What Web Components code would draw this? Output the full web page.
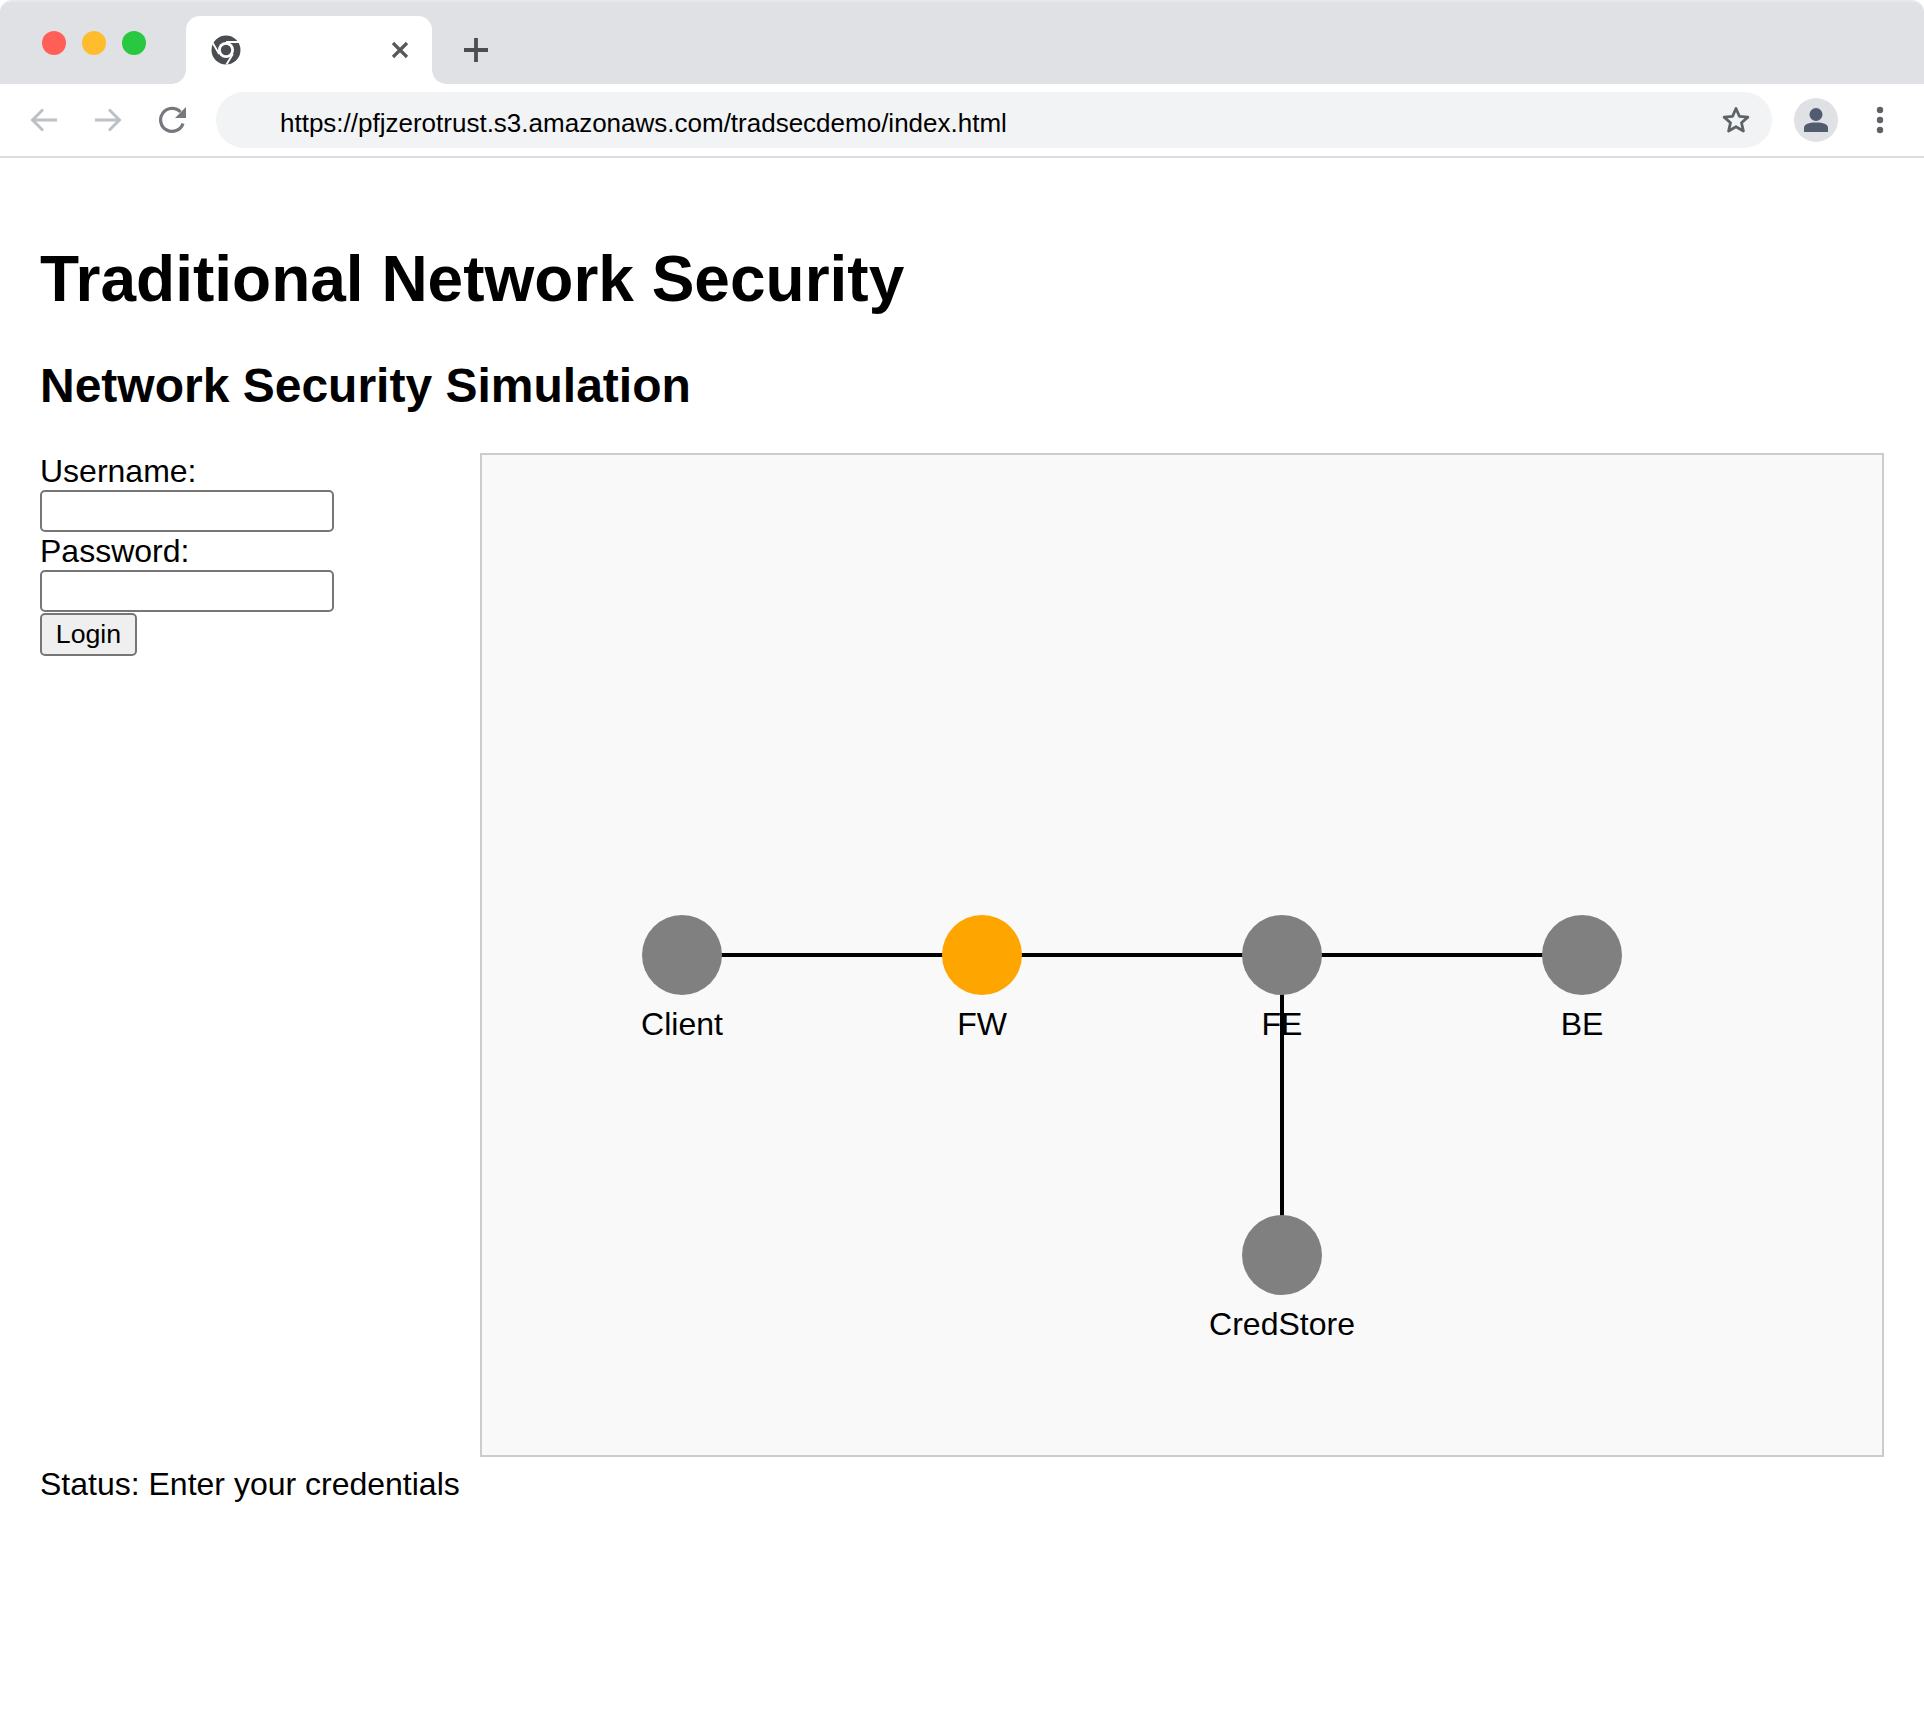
<!DOCTYPE html>
<html>
<head>
<meta charset="utf-8">
<title>Traditional Network Security</title>
<style>
    html, body { margin: 0; background: #fff; }
    body { font-family: "Liberation Sans", Arial, sans-serif; color: #000; }
</style>
</head>
<body>
<browser-frame url="https://pfjzerotrust.s3.amazonaws.com/tradsecdemo/index.html"></browser-frame>
<security-page heading="Traditional Network Security" subheading="Network Security Simulation" status="Status: Enter your credentials">
    <login-form slot="form"></login-form>
    <network-diagram slot="diagram"></network-diagram>
</security-page>

<script>
/**
 * Fake browser chrome: tab strip on top and toolbar with the address bar below it.
 */
class BrowserFrame extends HTMLElement {
    constructor() {
        super();
        this.attachShadow({ mode: "open" });
    }

    connectedCallback() {
        const url = this.getAttribute('url') || '';

        this.shadowRoot.innerHTML = `
            <style>
                :host { display: block; font-family: "Liberation Sans", Arial, sans-serif; }
                .strip {
                    height: 84px;
                    box-sizing: border-box;
                    background: #dfe1e5;
                    border-top: 2px solid #e8e9ec;
                    border-radius: 12px 12px 0 0;
                    display: flex;
                    align-items: flex-end;
                }
                .lights {
                    width: 186px;
                    height: 100%;
                    box-sizing: border-box;
                    padding: 29px 0 0 42px;
                    display: flex;
                    gap: 16px;
                }
                .lights i { width: 24px; height: 24px; border-radius: 50%; }
                .tab {
                    position: relative;
                    width: 246px;
                    height: 68px;
                    box-sizing: border-box;
                    background: #fff;
                    border-radius: 14px 14px 0 0;
                    display: flex;
                    align-items: center;
                    justify-content: space-between;
                    padding: 0 23px 0 25px;
                }
                /* concave corners where the tab meets the toolbar */
                .tab::before, .tab::after {
                    content: "";
                    position: absolute;
                    bottom: 0;
                    width: 14px;
                    height: 14px;
                }
                .tab::before { left: -14px; background: radial-gradient(circle at 0 0, transparent 13.5px, #fff 14px); }
                .tab::after { right: -14px; background: radial-gradient(circle at 100% 0, transparent 13.5px, #fff 14px); }
                .tab svg { display: block; }
                .plus { margin: 0 0 21px 31px; display: block; }
                .bar {
                    height: 74px;
                    box-sizing: border-box;
                    border-bottom: 2px solid #dcdde0;
                    display: flex;
                    align-items: center;
                    padding: 0 39px 0 30px;
                    background: #fff;
                }
                .nav { display: flex; gap: 36px; align-items: center; margin-right: 28px; }
                .nav svg { display: block; }
                .address {
                    flex: 1;
                    height: 56px;
                    border-radius: 28px;
                    background: #f1f3f4;
                    display: flex;
                    align-items: center;
                    justify-content: space-between;
                    padding: 0 21px 0 64px;
                    font-size: 26px;
                    color: #000;
                }
                .address span { padding-top: 6px; }
                .avatar {
                    width: 44px;
                    height: 44px;
                    border-radius: 50%;
                    background: #dfe1e5;
                    margin-left: 22px;
                    display: flex;
                    align-items: center;
                    justify-content: center;
                }
                .more { margin-left: 37px; display: block; }
            </style>
            <div class="strip">
                <div class="lights">
                    <i style="background:#ff5f57"></i>
                    <i style="background:#ffbd2e"></i>
                    <i style="background:#28c840"></i>
                </div>
                <div class="tab">
                    <svg width="30" height="30" viewBox="0 0 30 30">
                        <circle cx="15" cy="15" r="14.5" fill="#4a4d52"/>
                        <circle cx="15" cy="15" r="8" fill="#fff"/>
                        <circle cx="15" cy="15" r="5.2" fill="#4a4d52"/>
                        <path d="M15 7H28M8.1 19L1.6 7.8M21.9 19L15.4 29.5" stroke="#fff" stroke-width="1.8" fill="none"/>
                    </svg>
                    <svg width="18" height="18" viewBox="0 0 18 18">
                        <path d="M2 2L16 16M16 2L2 16" stroke="#55585c" stroke-width="3.2" fill="none"/>
                    </svg>
                </div>
                <svg class="plus" width="26" height="26" viewBox="0 0 26 26">
                    <path d="M13 1V25M1 13H25" stroke="#4a4d52" stroke-width="3.8" fill="none"/>
                </svg>
            </div>
            <div class="bar">
                <div class="nav">
                    <svg width="28" height="26" viewBox="0 0 28 26"><path d="M27 13H3M13 2.5L2.5 13L13 23.5" stroke="#bdc0c4" stroke-width="3" fill="none"/></svg>
                    <svg width="28" height="26" viewBox="0 0 28 26"><path d="M1 13H25M15 2.5L25.5 13L15 23.5" stroke="#bdc0c4" stroke-width="3" fill="none"/></svg>
                    <svg width="30" height="28" viewBox="0 0 30 28"><path d="M25 17.5A11.5 11.5 0 1 1 22.5 6" stroke="#75787c" stroke-width="3.2" fill="none"/><path d="M28 1V12H17Z" fill="#75787c"/></svg>
                </div>
                <div class="address">
                    <span>${url}</span>
                    <svg width="30" height="30" viewBox="0 0 30 30"><path d="M15 3.5L18.4 11.3L26.9 12.1L20.5 17.7L22.4 26L15 21.7L7.6 26L9.5 17.7L3.1 12.1L11.6 11.3Z" stroke="#5f6368" stroke-width="2.8" fill="none" stroke-linejoin="round"/></svg>
                </div>
                <div class="avatar">
                    <svg width="26" height="26" viewBox="0 0 26 26"><circle cx="13" cy="7.5" r="6.5" fill="#525c70"/><path d="M1 25V21C1 17 6 15.5 13 15.5C20 15.5 25 17 25 21V25Z" fill="#525c70"/></svg>
                </div>
                <svg class="more" width="10" height="28" viewBox="0 0 10 28"><circle cx="5" cy="4" r="3.2" fill="#5f6368"/><circle cx="5" cy="14" r="3.2" fill="#5f6368"/><circle cx="5" cy="24" r="3.2" fill="#5f6368"/></svg>
            </div>
        `;
    }
}

/**
 * Page body. Headings and status come from attributes, form and diagram are slotted.
 */
class SecurityPage extends HTMLElement {
    constructor() {
        super();
        this.attachShadow({ mode: "open" });
    }

    connectedCallback() {
        this.shadowRoot.innerHTML = `
            <style>
                :host {
                    display: block;
                    padding: 0 40px;
                    font-family: "Liberation Sans", Arial, sans-serif;
                    font-size: 32px;
                    color: #000;
                }
                h1 { font-size: 64px; line-height: 74px; margin: 0; padding-top: 84px; }
                h2 { font-size: 48px; line-height: 55px; margin: 0; padding-top: 42px; padding-bottom: 40px; }
                .main { display: flex; align-items: flex-start; }
                .left { width: 440px; flex: none; }
                .status { line-height: 37px; margin-top: 9px; }
            </style>
            <h1>${this.getAttribute('heading')}</h1>
            <h2>${this.getAttribute('subheading')}</h2>
            <div class="main">
                <div class="left"><slot name="form"></slot></div>
                <slot name="diagram"></slot>
            </div>
            <div class="status">${this.getAttribute('status')}</div>
        `;
    }
}

/**
 * Login form with username, password and the submit button.
 */
class LoginForm extends HTMLElement {
    constructor() {
        super();
        this.attachShadow({ mode: "open" });
    }

    connectedCallback() {
        this.shadowRoot.innerHTML = `
            <style>
                :host { display: block; font-size: 32px; }
                label { display: block; line-height: 37px; }
                input {
                    display: block;
                    box-sizing: border-box;
                    width: 294px;
                    height: 42px;
                    margin: 0 0 1px;
                    padding: 2px 4px;
                    border: 2px solid #767676;
                    border-radius: 5px;
                    background: #fff;
                    font: inherit;
                }
                button {
                    display: block;
                    box-sizing: border-box;
                    width: 97px;
                    height: 43px;
                    margin: 0;
                    padding: 0;
                    border: 2px solid #767676;
                    border-radius: 5px;
                    background: #efefef;
                    color: #000;
                    font-family: "Liberation Sans", Arial, sans-serif;
                    font-size: 26.7px;
                }
            </style>
            <label for="username">Username:</label>
            <input id="username" type="text">
            <label for="password">Password:</label>
            <input id="password" type="password">
            <button type="button">Login</button>
        `;
    }
}

/**
 * Network map. Nodes sit on a free canvas, links are drawn underneath them.
 */
class NetworkDiagram extends HTMLElement {
    constructor() {
        super();
        this.attachShadow({ mode: "open" });
    }

    connectedCallback() {
        const nodes = {
            Client: { x: 200, y: 500, fill: 'gray' },
            FW: { x: 500, y: 500, fill: 'orange' },
            FE: { x: 800, y: 500, fill: 'gray' },
            BE: { x: 1100, y: 500, fill: 'gray' },
            CredStore: { x: 800, y: 800, fill: 'gray' }
        };
        const links = [['Client', 'FW'], ['FW', 'FE'], ['FE', 'BE'], ['FE', 'CredStore']];

        const lines = links.map(([a, b]) =>
            `<line x1="${nodes[a].x}" y1="${nodes[a].y}" x2="${nodes[b].x}" y2="${nodes[b].y}" stroke="#000" stroke-width="4"/>`
        ).join('');
        const circles = Object.entries(nodes).map(([name, n]) => `
            <circle cx="${n.x}" cy="${n.y}" r="40" fill="${n.fill}"/>
            <text x="${n.x}" y="${n.y + 80}" text-anchor="middle">${name}</text>
        `).join('');

        this.shadowRoot.innerHTML = `
            <style>
                :host { display: block; flex: none; }
                svg {
                    display: block;
                    border: 2px solid #ccc;
                    background: #f9f9f9;
                    font-family: "Liberation Sans", Arial, sans-serif;
                    font-size: 32px;
                }
            </style>
            <svg width="1400" height="1000" viewBox="0 0 1400 1000">${lines}${circles}</svg>
        `;
    }
}

customElements.define("browser-frame", BrowserFrame);
customElements.define("security-page", SecurityPage);
customElements.define("login-form", LoginForm);
customElements.define("network-diagram", NetworkDiagram);
</script>
</body>
</html>
